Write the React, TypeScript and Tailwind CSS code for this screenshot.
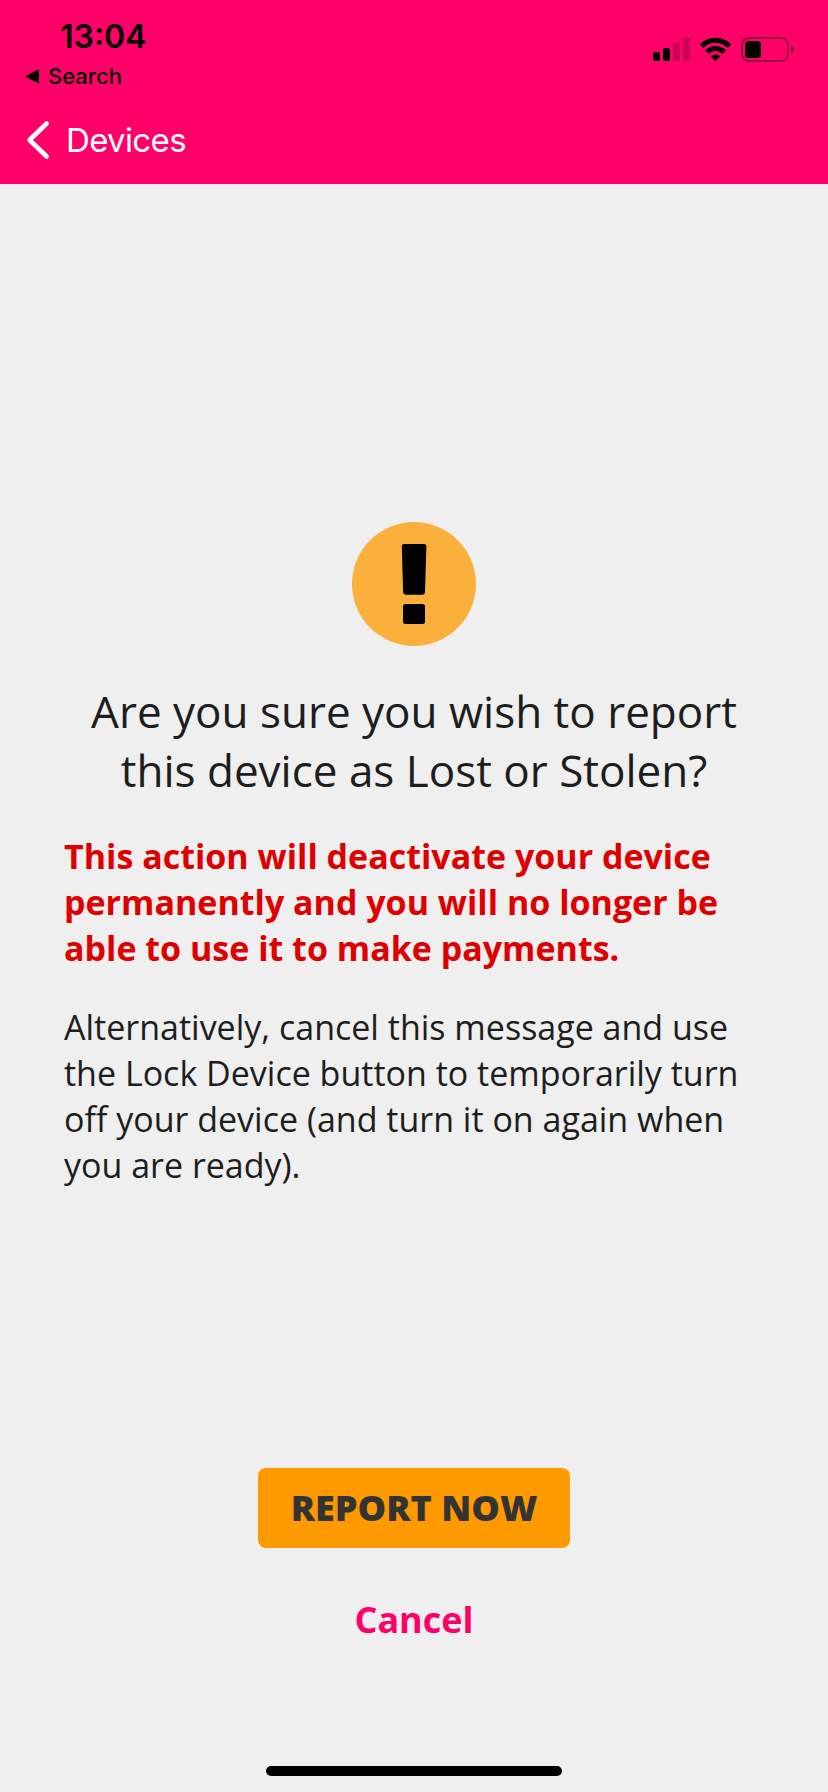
function StatusIcons() {
  return (
    <svg className="h-[60px] w-[190px]" viewBox="0 0 190 60" fill="none">
      <rect x="23" y="32" width="7" height="9" rx="1.8" fill="#000" />
      <rect x="33" y="28" width="7" height="13" rx="1.8" fill="#000" />
      <rect x="43" y="23" width="7" height="18" rx="1.8" fill="#000" fillOpacity="0.2" />
      <rect x="53" y="18" width="7" height="23" rx="1.8" fill="#000" fillOpacity="0.2" />
      <g fill="#000">
        <path d="M85.5 17.7c6 0 11.3 2.3 15.3 6.1.3.3.3.8 0 1.100l-2.500 2.500c-.3.300-.7.300-1 0a17 17 0 0 0-23.600 0c-.3.300-.7.300-1 0l-2.500-2.500c-.3-.3-.3-.8 0-1.100a22 22 0 0 1 15.300-6.100z" />
        <path d="M85.500 25.900c3.900 0 7.300 1.500 9.900 3.900.3.300.3.800 0 1.100l-2.600 2.500c-.3.300-.7.300-1 0a9.200 9.200 0 0 0-12.600 0c-.3.300-.7.300-1 0l-2.600-2.500c-.3-.3-.3-.8 0-1.100a14.300 14.300 0 0 1 9.900-3.900z" />
        <path d="M85.500 34.500c1.700 0 3.200.6 4.400 1.600.3.300.3.700 0 1l-3.900 3.700c-.3.300-.7.300-1 0l-3.900-3.700c-.3-.3-.3-.7 0-1a6.600 6.600 0 0 1 4.400-1.600z" />
      </g>
      <rect x="112" y="18" width="46" height="23" rx="6.500" stroke="#000" strokeOpacity="0.4" strokeWidth="2" />
      <rect x="115" y="21" width="16" height="17" rx="3.500" fill="#000" />
      <path d="M161 25.500c1.700.8 2.700 2.300 2.700 4s-1 3.200-2.700 4z" fill="#000" fillOpacity="0.45" />
    </svg>
  );
}

function Header() {
  return (
    <header className="flex h-[184px] shrink-0 justify-between bg-[#ff0069] font-['Inter',sans-serif]">
      <div className="flex flex-col">
        <div className="mt-[17px] ml-[60px] h-[40px] text-[32px] leading-[40px] font-semibold text-black">13:04</div>
        <div className="mt-[5px] ml-[25px] flex h-[28px] items-center gap-[8px] text-black">
          <svg className="h-[15px] w-[15px]" viewBox="0 0 15 15">
            <path d="M13.300 1.300v12.200L1.500 7.400z" fill="#000" stroke="#000" strokeWidth="1.500" strokeLinejoin="round" />
          </svg>
          <span className="text-[22px] leading-[28px] font-medium">Search</span>
        </div>
        <div className="mt-[28px] ml-[26px] flex h-[44px] items-center text-white">
          <svg className="h-[40px] w-[24px]" viewBox="0 0 24 40" fill="none">
            <path d="M20.700 3.500L3.500 20l17.200 16.500" stroke="#fff" strokeWidth="4.600" strokeLinecap="round" strokeLinejoin="round" />
          </svg>
          <span className="ml-[16px] text-[33px] leading-[44px] tracking-[-0.65px]">Devices</span>
        </div>
      </div>
      <div className="mt-[20px] mr-[8px]">
        <StatusIcons />
      </div>
    </header>
  );
}

function WarningIcon() {
  return (
    <svg className="h-[124px] w-[124px] self-center" viewBox="0 0 124 124">
      <circle cx="62" cy="62" r="62" fill="#fbb03b" />
      <path d="M52.300 22h19.700q2.500 0 2.400 2.500L73 70.300q-.1 2.400-2.500 2.400H53.600q-2.400 0-2.500-2.400L49.800 24.500Q49.700 22 52.300 22z" fill="#000" />
      <rect x="51" y="82" width="22" height="20" rx="2.500" fill="#000" />
    </svg>
  );
}

export default function App() {
  return (
    <div className="flex h-[1792px] w-[828px] flex-col overflow-hidden bg-[#efefef] font-['Open_Sans',sans-serif] whitespace-nowrap">
      <Header />
      <main className="flex flex-1 flex-col px-[64px] pt-[338px] text-[#1d1d1d]">
        <WarningIcon />
        <h1 className="mt-[36px] text-center text-[44px] leading-[59px]">
          Are you sure you wish to report
          <br />
          this device as Lost or Stolen?
        </h1>
        <p className="mt-[33px] text-[34px] leading-[46px] font-bold text-[#de0000]">
          This action will deactivate your device
          <br />
          permanently and you will no longer be
          <br />
          able to use it to make payments.
        </p>
        <p className="mt-[33px] text-[34px] leading-[46px]">
          Alternatively, cancel this message and use
          <br />
          the Lock Device button to temporarily turn
          <br />
          off your device (and turn it on again when
          <br />
          you are ready).
        </p>
        <button className="mt-[280px] h-[80px] w-[312px] self-center rounded-[8px] bg-[#ff9900] text-[36px] leading-[80px] font-extrabold text-[#333333]">
          REPORT NOW
        </button>
        <button className="mt-[47px] self-center text-[36px] leading-[50px] font-bold text-[#ff0069]">Cancel</button>
      </main>
      <div className="mb-[16px] h-[10px] w-[296px] shrink-0 self-center rounded-full bg-black" />
    </div>
  );
}
